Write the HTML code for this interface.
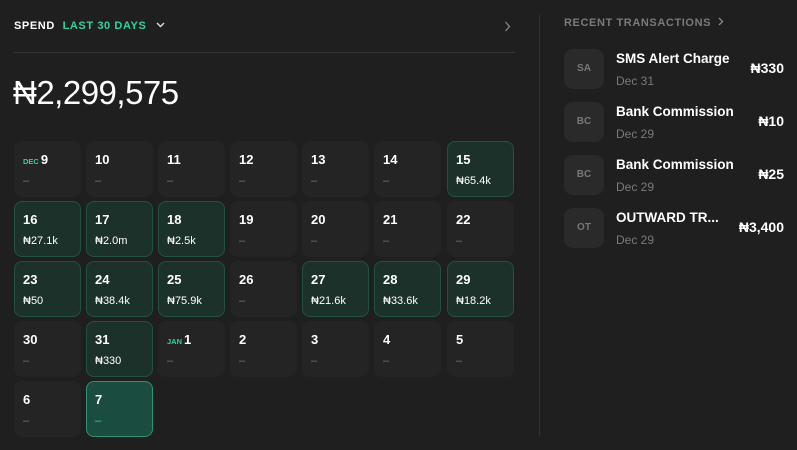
<!DOCTYPE html>
<html><head><meta charset="utf-8"><style>
*{margin:0;padding:0;box-sizing:border-box}
body{width:797px;height:450px;background:#1f1f1f;font-family:"Liberation Sans","DejaVu Sans",sans-serif;color:#fff;position:relative;overflow:hidden}
.abs{position:absolute}
.hdr{left:14px;top:20px;font-size:11px;font-weight:bold;letter-spacing:0.6px}
.hdr .g{color:#2fd49a;margin-left:4px}
.line{left:14px;top:52px;width:501px;height:1px;background:#353535}
.total{left:13px;top:74px;font-size:33px;letter-spacing:-0.5px}
.cell{position:absolute;width:67px;height:56px;border-radius:8px;background:#242424;padding:11px 0 0 9px}
.cell .d{font-size:13px;font-weight:bold}
.cell .v{font-size:11px;margin-top:8px;color:#777}
.cell.s{background:#1c3129;border:1px solid #1f5240;padding:10px 0 0 8px}
.cell.s .v{color:#fff}
.cell.t{background:#1a4d40;border:1px solid #2a9470;padding:10px 0 0 8px}
.cell.t .v{color:#2fe0a0}
.m{color:#2fd49a;font-size:7.5px;font-weight:bold;margin-right:2px}
.vdiv{left:539px;top:15px;width:1px;height:421px;background:#333}
.rt{left:564px;top:17px;font-size:11px;font-weight:bold;color:#7a7a7a;letter-spacing:0.6px}
.av{position:absolute;left:564px;width:40px;height:40px;border-radius:9px;background:#2a2a2a;color:#777;font-size:10px;font-weight:bold;text-align:center;line-height:40px}
.tn{position:absolute;left:616px;font-size:13.5px;font-weight:bold}
.td{position:absolute;left:616px;font-size:12px;color:#7a7a7a}
.ta{position:absolute;right:13px;font-size:14px;font-weight:bold}
</style></head><body>
<div class="abs hdr">SPEND <span class="g">LAST 30 DAYS</span>
<svg style="margin-left:6px;vertical-align:1px" width="9" height="6" viewBox="0 0 9 6"><path d="M1 1l3.5 3.5L8 1" stroke="#ddd" stroke-width="1.4" fill="none"/></svg></div>
<svg class="abs" style="left:504px;top:21px" width="7" height="11" viewBox="0 0 7 11"><path d="M1.5 1l4 4.5-4 4.5" stroke="#888" stroke-width="1.3" fill="none"/></svg>
<div class="abs line"></div>
<div class="abs total">₦2,299,575</div>

<div class="cell" style="left:14px;top:141px"><div class="d"><span class="m">DEC</span>9</div><div class="v">–</div></div>
<div class="cell" style="left:86px;top:141px"><div class="d">10</div><div class="v">–</div></div>
<div class="cell" style="left:158px;top:141px"><div class="d">11</div><div class="v">–</div></div>
<div class="cell" style="left:230px;top:141px"><div class="d">12</div><div class="v">–</div></div>
<div class="cell" style="left:302px;top:141px"><div class="d">13</div><div class="v">–</div></div>
<div class="cell" style="left:374px;top:141px"><div class="d">14</div><div class="v">–</div></div>
<div class="cell s" style="left:447px;top:141px"><div class="d">15</div><div class="v">₦65.4k</div></div>

<div class="cell s" style="left:14px;top:201px"><div class="d">16</div><div class="v">₦27.1k</div></div>
<div class="cell s" style="left:86px;top:201px"><div class="d">17</div><div class="v">₦2.0m</div></div>
<div class="cell s" style="left:158px;top:201px"><div class="d">18</div><div class="v">₦2.5k</div></div>
<div class="cell" style="left:230px;top:201px"><div class="d">19</div><div class="v">–</div></div>
<div class="cell" style="left:302px;top:201px"><div class="d">20</div><div class="v">–</div></div>
<div class="cell" style="left:374px;top:201px"><div class="d">21</div><div class="v">–</div></div>
<div class="cell" style="left:447px;top:201px"><div class="d">22</div><div class="v">–</div></div>

<div class="cell s" style="left:14px;top:261px"><div class="d">23</div><div class="v">₦50</div></div>
<div class="cell s" style="left:86px;top:261px"><div class="d">24</div><div class="v">₦38.4k</div></div>
<div class="cell s" style="left:158px;top:261px"><div class="d">25</div><div class="v">₦75.9k</div></div>
<div class="cell" style="left:230px;top:261px"><div class="d">26</div><div class="v">–</div></div>
<div class="cell s" style="left:302px;top:261px"><div class="d">27</div><div class="v">₦21.6k</div></div>
<div class="cell s" style="left:374px;top:261px"><div class="d">28</div><div class="v">₦33.6k</div></div>
<div class="cell s" style="left:447px;top:261px"><div class="d">29</div><div class="v">₦18.2k</div></div>

<div class="cell" style="left:14px;top:321px"><div class="d">30</div><div class="v">–</div></div>
<div class="cell s" style="left:86px;top:321px"><div class="d">31</div><div class="v">₦330</div></div>
<div class="cell" style="left:158px;top:321px"><div class="d"><span class="m">JAN</span>1</div><div class="v">–</div></div>
<div class="cell" style="left:230px;top:321px"><div class="d">2</div><div class="v">–</div></div>
<div class="cell" style="left:302px;top:321px"><div class="d">3</div><div class="v">–</div></div>
<div class="cell" style="left:374px;top:321px"><div class="d">4</div><div class="v">–</div></div>
<div class="cell" style="left:447px;top:321px"><div class="d">5</div><div class="v">–</div></div>

<div class="cell" style="left:14px;top:381px"><div class="d">6</div><div class="v">–</div></div>
<div class="cell t" style="left:86px;top:381px"><div class="d">7</div><div class="v">–</div></div>

<div class="abs vdiv"></div>
<div class="abs rt">RECENT TRANSACTIONS <svg style="margin-left:3px;vertical-align:0" width="6" height="9" viewBox="0 0 6 9"><path d="M1 1l3.5 3.5L1 8" stroke="#888" stroke-width="1.3" fill="none"/></svg></div>

<div class="av" style="top:49px">SA</div>
<div class="tn" style="top:51px">SMS Alert Charge</div>
<div class="td" style="top:74px">Dec 31</div>
<div class="ta" style="top:60px">₦330</div>

<div class="av" style="top:102px">BC</div>
<div class="tn" style="top:104px">Bank Commission</div>
<div class="td" style="top:127px">Dec 29</div>
<div class="ta" style="top:113px">₦10</div>

<div class="av" style="top:155px">BC</div>
<div class="tn" style="top:157px">Bank Commission</div>
<div class="td" style="top:180px">Dec 29</div>
<div class="ta" style="top:166px">₦25</div>

<div class="av" style="top:208px">OT</div>
<div class="tn" style="top:210px">OUTWARD TR...</div>
<div class="td" style="top:233px">Dec 29</div>
<div class="ta" style="top:219px">₦3,400</div>
</body></html>
